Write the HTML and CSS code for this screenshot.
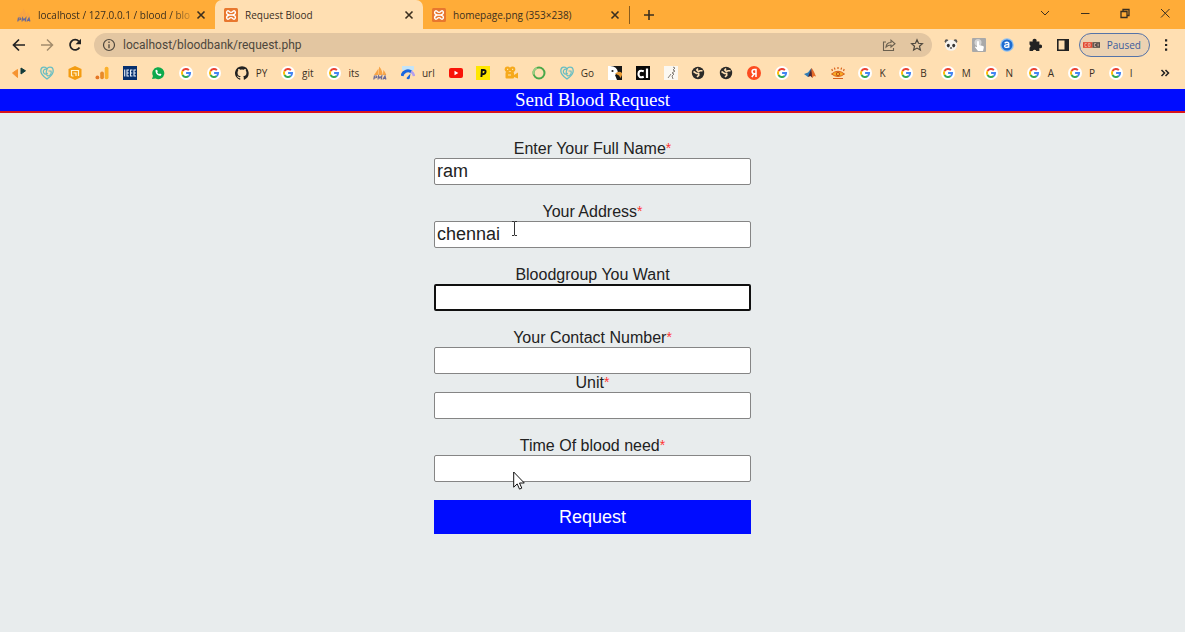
FILE: index.html
```html
<!DOCTYPE html>
<html lang="en">
  <head>
    <meta charset="UTF-8" />
    <meta name="viewport" content="width=device-width, initial-scale=1.0" />
    <title>Request Blood</title>
    <link rel="stylesheet" href="styles.css">
  </head>
  <body>
    <!-- icons used more than once -->
    <svg class="sprite" aria-hidden="true">
      <symbol id="google" viewBox="0 0 14 14">
        <circle cx="7" cy="7" r="7" fill="#fff" />
        <g fill="none" stroke-width="1.9">
          <path d="M3.5 5A4.1 4.1 0 0 1 9.9 4.1" stroke="#ea4335" />
          <path d="M3.5 9A4.1 4.1 0 0 1 3.5 5" stroke="#fbbc05" />
          <path d="M3.5 9A4.1 4.1 0 0 0 9.7 10.1" stroke="#34a853" />
          <path d="M9.7 10.1A4.1 4.1 0 0 0 11.1 7H7.1" stroke="#4285f4" />
        </g>
      </symbol>
      <symbol id="xampp" viewBox="0 0 14 14">
        <rect width="14" height="14" rx="1.5" fill="#e8772e" />
        <path d="M5.200 7Q2 6 2.700 4T5 3.300Q7 5.500 9 3.300q1.700-1.300 2.300.7T8.800 7q3.200 1 2.500 3T9 10.700Q7 8.500 5 10.700q-1.700 1.300-2.300-.7T5.200 7h3.600" fill="none" stroke="#fff" stroke-width="1.400" />
      </symbol>
      <symbol id="pma" viewBox="0 0 14 14">
        <path d="M1 9L5.500 2.500V9zM6 9V.5q3.500 3.500 3.500 8.500zM10 9l.3-5q2.200 2 3 5z" fill="#f8a445" />
        <path d="M.8 13.500l.6-3.500h1.800q1 .3.300 1.500l-2 .3M5 13.500l.6-3.500 1.200 2 2-2-.5 3.500M9.800 13.500l2.200-3.500.9 3.500M10.500 12.300h2" fill="none" stroke="#6b6a96" stroke-width="1.200" />
      </symbol>
      <symbol id="heart" viewBox="0 0 14 14">
        <path d="M7 13C4 11 .8 8.500.8 5 .8 2.500 2.300 1.200 4 1.200S6.500 2 7 3C7.500 2 8.500 1.200 10 1.200s3.200 1.300 3.200 3.800C13.200 8.500 10 11 7 13z" fill="none" stroke="#66bdc2" stroke-width="1.300" />
        <path d="M6.500 3.500C4.500 2.500 2.800 4.500 3.500 6.500s3.500 2.500 4 .3M7 3.500C5.500 6 6 9 8 10c2.500-.5 3.800-2.500 3-5H8.500" fill="none" stroke="#66bdc2" stroke-width="1.200" />
      </symbol>
      <symbol id="globe" viewBox="0 0 14 14">
        <circle cx="7" cy="7" r="6.200" fill="#2b2a28" />
        <path d="M2.500 5.500l3 2h2.200v1.800L6 11M7 2.500L5.800 4l1.500 1.500L9 4.800h2.500" fill="none" stroke="#ffdfb2" stroke-width="1.600" />
      </symbol>
      <symbol id="close" viewBox="0 0 10 10">
        <path d="M1.500 1.500l7 7M8.500 1.500l-7 7" fill="none" stroke="currentColor" stroke-width="1.600" />
      </symbol>
    </svg>

    <div class="browser">
      <div class="tab-bar">
        <div class="tab tab-first">
          <svg class="icon"><use href="#pma" /></svg>
          <span class="tab-title fade">localhost / 127.0.0.1 / blood / blo</span>
          <button class="tab-close" aria-label="Close tab"><svg><use href="#close" /></svg></button>
        </div>
        <div class="tab active">
          <svg class="icon"><use href="#xampp" /></svg>
          <span class="tab-title">Request Blood</span>
          <button class="tab-close" aria-label="Close tab"><svg><use href="#close" /></svg></button>
        </div>
        <div class="tab tab-last">
          <svg class="icon"><use href="#xampp" /></svg>
          <span class="tab-title">homepage.png (353×238)</span>
          <button class="tab-close" aria-label="Close tab"><svg><use href="#close" /></svg></button>
        </div>
        <button class="new-tab" aria-label="New tab">
          <svg viewBox="0 0 12 12"><path d="M6 1v10M1 6h10" stroke="currentColor" stroke-width="1.600" /></svg>
        </button>
        <div class="window-buttons">
          <button aria-label="Search tabs"><svg viewBox="0 0 12 12"><path d="M2 4l4 4 4-4" fill="none" stroke="currentColor" /></svg></button>
          <button aria-label="Minimize"><svg viewBox="0 0 12 12"><path d="M2 6.500h8.500" stroke="currentColor" /></svg></button>
          <button aria-label="Restore"><svg viewBox="0 0 12 12"><path d="M2 4.500h6v6H2zM4 4.500v-2h6v6H8" fill="none" stroke="currentColor" stroke-width="1.300" /></svg></button>
          <button aria-label="Close"><svg viewBox="0 0 12 12"><path d="M2 2l8.500 8.500M10.500 2L2 10.500" fill="none" stroke="currentColor" /></svg></button>
        </div>
      </div>

      <div class="toolbar">
        <div class="nav-buttons">
          <button aria-label="Back"><svg viewBox="0 0 14 14"><path d="M13 7H2M7 1.500L1.500 7 7 12.500" fill="none" stroke="#222" stroke-width="1.700" /></svg></button>
          <button aria-label="Forward"><svg viewBox="0 0 14 14"><path d="M1 7h11M7 1.500L12.500 7 7 12.500" fill="none" stroke="#a38c6c" stroke-width="1.500" /></svg></button>
          <button aria-label="Reload"><svg viewBox="0 0 14 14"><path d="M11.500 9.500a5.100 5.100 0 1 1-.6-6.200" fill="none" stroke="#222" stroke-width="1.800" /><path d="M13 .8v5.400H7.600z" fill="#222" /></svg></button>
        </div>
        <div class="address-bar">
          <svg viewBox="0 0 14 14"><circle cx="7" cy="7" r="5.500" fill="none" stroke="#4d463c" stroke-width="1.200" /><path d="M7 6.200v4M7 3.600v1.400" stroke="#4d463c" stroke-width="1.300" /></svg>
          <input type="text" class="url" aria-label="Address" value="localhost/bloodbank/request.php" />
          <button aria-label="Share"><svg viewBox="0 0 14 14"><path d="M4 4H1.500v8.500h10V10M4 9c.3-3 2-4.500 5-4.500V2.200L13 5.800 9 9V7C7 7 5.500 7.500 4 9z" fill="none" stroke="#6b604f" stroke-width="1.100" /></svg></button>
          <button aria-label="Bookmark"><svg viewBox="0 0 14 14"><path d="M7 1.800l1.500 3.500 3.900.4-2.900 2.600.9 3.800L7 10.100l-3.400 2 .9-3.800-2.900-2.600 3.900-.4z" fill="none" stroke="#4d463c" stroke-width="1.200" /></svg></button>
        </div>
        <div class="extensions">
          <button aria-label="Panda"><svg viewBox="0 0 14 14"><circle cx="2.600" cy="3.200" r="1.900" fill="#555" /><circle cx="11.400" cy="3.200" r="1.900" fill="#555" /><ellipse cx="7" cy="7.300" rx="6" ry="5.500" fill="#f6f3ee" /><ellipse cx="4.300" cy="7.600" rx="1.500" ry="1.800" fill="#333" /><ellipse cx="9.700" cy="7.600" rx="1.500" ry="1.800" fill="#333" /><ellipse cx="7" cy="10" rx="1.200" ry=".8" fill="#333" /></svg></button>
          <button aria-label="Touch"><svg viewBox="0 0 14 14"><rect width="14" height="14" rx="1" fill="#a9a9a9" /><circle cx="6" cy="4.500" r="3.500" fill="#d4d4d4" /><path d="M5 3.500q1-1 2 0V7l4 1q1 .3.800 1.500L11 13H6L2.800 9q.8-1 2.200.3z" fill="#fff" /></svg></button>
          <button aria-label="Reader"><svg viewBox="0 0 14 14"><circle cx="7" cy="7" r="6.800" fill="#8fc0f0" /><circle cx="7" cy="7" r="5.500" fill="#1c6bd0" /><path d="M4.600 5.200q2.400-2 4.200 0v4.600M8.800 6.800q-4-.4-4.200 1.400.4 2.200 4.200.4" fill="none" stroke="#fff" stroke-width="1.300" /></svg></button>
          <button aria-label="Extensions"><svg viewBox="0 0 14 14"><path d="M1.500 3.500h3.300a2 2 0 1 1 3.600 0h3v3.200a1.900 1.900 0 1 1 0 3.400V13H8.300a1.900 1.900 0 0 0-3.500 0H1.500V9.700a1.800 1.800 0 0 0 0-3.200z" fill="#222" /></svg></button>
          <button aria-label="Side panel"><svg viewBox="0 0 14 14"><path d="M1.800 1.800h10.400v10.400H1.800z" fill="none" stroke="#222" stroke-width="1.600" /><path d="M8.500 1.500h4v11h-4z" fill="#222" /></svg></button>
        </div>
        <button class="profile">
          <svg viewBox="0 0 18 8"><path d="M0 1h10v6H0z" fill="#e2452f" /><path d="M10 1h8v6h-8z" fill="#554d48" /><path d="M4 2.500H2v3h2M5.500 2.500h2v3h-2zM14 2.500h-2v3h2M16 2.500v3" fill="none" stroke="#f3c6b4" stroke-width=".8" /></svg>
          Paused
        </button>
        <button class="menu" aria-label="Menu"><svg viewBox="0 0 14 14"><path d="M6 1.200h2.200v2.200H6zM6 5.900h2.200v2.200H6zM6 10.600h2.200v2.200H6z" fill="#222" /></svg></button>
      </div>

      <div class="bookmarks">
        <nav class="bookmark-list">
          <a href="#" aria-label="Shapes"><svg viewBox="0 0 14 14"><path d="M.5 7L5.500 3.500v8z" fill="#f59331" stroke="#f59331" stroke-linejoin="round" /><path d="M9 2l4.500 2.800L9 8z" fill="#123b3b" stroke="#123b3b" stroke-linejoin="round" /></svg></a>
          <a href="#" aria-label="Heart"><svg><use href="#heart" /></svg></a>
          <a href="#" aria-label="Hexagon"><svg viewBox="0 0 14 14"><path d="M7 0l6.500 3v8L7 14 .5 11V3z" fill="#f39c12" /><path d="M3.500 10V4.500h7V10M5.500 7h2.500v3M3.500 10h2" fill="none" stroke="#fff3d0" stroke-width="1.200" /></svg></a>
          <a href="#" aria-label="Analytics"><svg viewBox="0 0 14 14"><circle cx="2.400" cy="11.400" r="1.900" fill="#e57624" /><rect x="5.200" y="5.500" width="3.700" height="7.800" rx="1.800" fill="#e88a28" /><rect x="9.700" y=".8" width="3.800" height="12.500" rx="1.800" fill="#fbb02b" /></svg></a>
          <a href="#" aria-label="IEEE"><svg viewBox="0 0 14 14"><path d="M0 0h14v14H0z" fill="#062f6e" /><path d="M1.700 3.500v7M6 4H4v6h2M4 7h1.800M9.500 4h-2v6h2M7.500 7h1.800M13 4h-2v6h2M11 7h1.800" fill="none" stroke="#e9f1fb" stroke-width="1.100" /></svg></a>
          <a href="#" aria-label="WhatsApp"><svg viewBox="0 0 14 14"><path d="M1 13l1-3A6 6 0 1 1 4.500 12.500z" fill="#0da94c" /><path d="M4.500 4q-.5 5 5 6l1-1.800-1.600-.7-.9.7q-1.300-.7-1.800-1.900l.6-.8L6 3.800z" fill="#fff" /></svg></a>
          <a href="#" aria-label="Google"><svg><use href="#google" /></svg></a>
          <a href="#" aria-label="Google"><svg><use href="#google" /></svg></a>
          <a href="#"><svg viewBox="0 0 16 16"><path d="M8 .2a8 8 0 0 0-2.500 15.600c.4 0 .5-.2.5-.4v-1.500c-2.200.5-2.700-1-2.700-1-.4-.9-.9-1.200-.9-1.200-.7-.5.1-.5.1-.5.800.100 1.200.800 1.200.800.700 1.200 1.900.9 2.300.7.100-.5.300-.9.500-1.100-1.800-.2-3.600-.9-3.600-4 0-.9.300-1.600.8-2.100-.1-.2-.4-1 .1-2.100 0 0 .7-.2 2.200.8a7.600 7.600 0 0 1 4 0c1.500-1 2.200-.8 2.200-.8.400 1.100.2 1.900.1 2.100.5.600.8 1.300.8 2.100 0 3.100-1.900 3.700-3.700 3.900.3.300.6.800.6 1.500v2.200c0 .2.100.500.600.400A8 8 0 0 0 8 .2z" fill="#222" /></svg>PY</a>
          <a href="#"><svg><use href="#google" /></svg>git</a>
          <a href="#"><svg><use href="#google" /></svg>its</a>
          <a href="#" aria-label="phpMyAdmin"><svg><use href="#pma" /></svg></a>
          <a href="#"><svg viewBox="0 0 14 14"><path d="M1 0h12v4H1z" fill="#c4e4f8" /><path d="M1 10a6 6 0 0 1 9.500-4" fill="none" stroke="#1967e0" stroke-width="3" /><path d="M10 5.700a6 6 0 0 1 3 4.500" fill="none" stroke="#b5a0ee" stroke-width="2.500" /><path d="M5.500 12l4-4.500L8.800 12a1.700 1.700 0 0 1-3.300 0z" fill="#1967e0" /></svg>url</a>
          <a href="#" aria-label="YouTube"><svg viewBox="0 0 14 14"><rect y="2" width="14" height="10" rx="2" fill="#f91307" /><path d="M5.500 4.800v4.400L9.300 7z" fill="#fff" /></svg></a>
          <a href="#" aria-label="P"><svg viewBox="0 0 14 14"><path d="M0 0h14v14H0z" fill="#ffe600" /><path d="M5.400 11l.5-7h1.600q2.600.2 2 2.300T5.800 8.200" fill="none" stroke="#111" stroke-width="1.900" /></svg></a>
          <a href="#" aria-label="Movies"><svg viewBox="0 0 14 14"><circle cx="3.500" cy="3.300" r="2.800" fill="#f6a91b" /><circle cx="8.500" cy="3.300" r="2.800" fill="#f6a91b" /><rect x="1.500" y="6" width="8.500" height="6.500" rx="1" fill="#f6a91b" /><path d="M10 9l4-2.500v6L10 11z" fill="#f6a91b" /><path d="M3 2.800h1.200v1.200H3zM8 2.800h1.200v1.200H8zM4 8.500h3v1H4z" fill="#ffe5ac" /></svg></a>
          <a href="#" aria-label="Ring"><svg viewBox="0 0 14 14"><circle cx="7" cy="7" r="5.500" fill="none" stroke="#49a849" stroke-width="2" /><path d="M5 1.900a5.500 5.500 0 0 0-3.300 6.500" fill="none" stroke="#9bcf83" stroke-width="2" /></svg></a>
          <a href="#"><svg><use href="#heart" /></svg>Go</a>
          <a href="#" aria-label="Duck"><svg viewBox="0 0 14 14"><path d="M0 0h14v14H0z" fill="#171717" /><path d="M0 0q9-.5 10 6.500L7 9l2 5H0z" fill="#fff" /><circle cx="4.500" cy="5" r="1.100" fill="#222" /><path d="M7 7.500q4-3 7-.5v2l-1.500 3-1.500-2.500z" fill="#e79a34" /></svg></a>
          <a href="#" aria-label="cl"><svg viewBox="0 0 14 14"><path d="M0 0h14v14H0z" fill="#080808" /><path d="M7.800 5.200Q2.500 3.500 2.500 8t5.300 2.800M11 2.500v9.500" fill="none" stroke="#fff" stroke-width="2.200" /></svg></a>
          <a href="#" aria-label="Figure"><svg viewBox="0 0 14 14"><path d="M0 0h14v14H0z" fill="#fbf8f2" /><path d="M9 1l2 1-2 2 2 1-3 2 2 1-2 2M7 8l-3 4M8 10l1 3" fill="none" stroke="#77716a" stroke-width=".9" /></svg></a>
          <a href="#" aria-label="Site"><svg><use href="#globe" /></svg></a>
          <a href="#" aria-label="Site"><svg><use href="#globe" /></svg></a>
          <a href="#" aria-label="Yandex"><svg viewBox="0 0 14 14"><circle cx="7" cy="7" r="7" fill="#fc4b20" /><path d="M9 11V3.500H7.300q-2.200 0-2.200 2.100t2.200 2.100H9M7.200 7.700L4.800 11" fill="none" stroke="#fff" stroke-width="1.500" /></svg></a>
          <a href="#" aria-label="Google"><svg><use href="#google" /></svg></a>
          <a href="#" aria-label="MATLAB"><svg viewBox="0 0 14 14"><path d="M1 8l4-1.500L8.500 2l-1 6L5 11z" fill="#317bb5" /><path d="M5 11l2-5 1.500-4 1 10-2-2z" fill="#4b2431" /><path d="M8.500 2Q10 3 13 10.500l-2-.5-2 2z" fill="#e36b2b" /></svg></a>
          <a href="#" aria-label="Eye"><svg viewBox="0 0 14 14"><path d="M.5 8Q7 2.500 13.500 8 7 13 .5 8z" fill="#f9ab24" stroke="#d8611b" /><circle cx="7" cy="8" r="2" fill="#b9430f" /><circle cx="7" cy="8" r="1" fill="#ffd33a" /><path d="M1.500 5L.8 3M4 3.600l-.6-2M7 3V1M10 3.600l.6-2M12.500 5l.7-2M2 12.500h10" stroke="#d8611b" stroke-width="1.200" /></svg></a>
          <a href="#"><svg><use href="#google" /></svg>K</a>
          <a href="#"><svg><use href="#google" /></svg>B</a>
          <a href="#"><svg><use href="#google" /></svg>M</a>
          <a href="#"><svg><use href="#google" /></svg>N</a>
          <a href="#"><svg><use href="#google" /></svg>A</a>
          <a href="#"><svg><use href="#google" /></svg>P</a>
          <a href="#"><svg><use href="#google" /></svg>I</a>
        </nav>
        <button class="more" aria-label="More bookmarks"><svg viewBox="0 0 10 10"><path d="M1.500 2l3 3-3 3M5.500 2l3 3-3 3" fill="none" stroke="#222" stroke-width="1.500" /></svg></button>
      </div>
    </div>

    <h1 class="title">Send Blood Request</h1>

    <form class="request-form">
      <div class="field">
        <label for="name">Enter Your Full Name<span class="star">*</span></label>
        <input type="text" id="name" value="ram" />
      </div>
      <div class="field">
        <label for="address">Your Address<span class="star">*</span></label>
        <input type="text" id="address" value="chennai" />
        <svg class="text-cursor" viewBox="0 0 7 15"><path d="M1 .5h2l.5.5.5-.5h2M3.500 1v13M1 14.500h2l.5-.5.5.5h2" fill="none" stroke="#333" /></svg>
      </div>
      <div class="field">
        <label for="bloodgroup">Bloodgroup You Want</label>
        <input type="text" id="bloodgroup" class="focused" />
      </div>
      <div class="field joined">
        <label for="contact">Your Contact Number<span class="star">*</span></label>
        <input type="text" id="contact" />
      </div>
      <div class="field">
        <label for="unit">Unit<span class="star">*</span></label>
        <input type="text" id="unit" />
      </div>
      <div class="field">
        <label for="time">Time Of blood need<span class="star">*</span></label>
        <input type="text" id="time" />
        <svg class="pointer" viewBox="0 0 12 19"><path d="M.7 1v15.200l3.500-3.300 2.300 5.200 2.300-1-2.300-5.100h4.800z" fill="#fff" stroke="#111" /></svg>
      </div>
      <button type="button" class="request-btn">Request</button>
    </form>
  </body>
</html>
```
FILE: styles.css
```css
* {
  box-sizing: border-box;
}

body {
  margin: 0;
  background-color: #e8eced;
  color: #222;
  font-family: "Liberation Sans", Arial, sans-serif;
  font-size: 16px;
}

button {
  padding: 0;
  border: none;
  background: none;
  color: inherit;
  font-family: inherit;
  cursor: pointer;
}

svg {
  display: block;
  flex: none;
}

.sprite {
  position: absolute;
  width: 0;
  height: 0;
}

/* browser window */
.browser {
  background-color: #ffdfb2;
  color: #3b2f1f;
  font-family: "Open Sans", "Noto Sans", sans-serif;
  font-size: 10px;
}

.tab-bar {
  display: flex;
  align-items: center;
  height: 29px;
  background-color: #ffac38;
}

.tab {
  display: flex;
  align-items: center;
  gap: 7px;
  width: 208px;
  height: 29px;
  padding: 0 9px;
}

.tab-first {
  width: 215px;
  padding-left: 17px;
}

.tab-first .tab-close {
  margin-left: -7px;
}

.tab.active {
  border-radius: 7px 7px 0 0;
  background-color: #ffdfb2;
}

.tab-last {
  width: 207px;
  height: 18px;
  border-right: 1px solid #8a5c1c;
}

.icon {
  width: 14px;
  height: 14px;
}

.tab-title {
  flex: 1;
  white-space: nowrap;
}

.fade {
  mask-image: linear-gradient(to right, #000 85%, transparent);
}

.tab-close svg {
  width: 10px;
  height: 10px;
}

.new-tab {
  margin-left: 13px;
}

.new-tab svg {
  width: 12px;
  height: 12px;
}

.window-buttons {
  display: flex;
  gap: 28px;
  margin-left: auto;
  padding: 0 14px 4px 0;
}

.window-buttons svg {
  width: 12px;
  height: 12px;
}

.toolbar {
  display: flex;
  align-items: center;
  height: 32px;
  padding: 0 12px;
}

.toolbar svg {
  width: 14px;
  height: 14px;
}

.nav-buttons,
.extensions {
  display: flex;
  gap: 14px;
}

.address-bar {
  display: flex;
  flex: 1;
  align-items: center;
  gap: 14px;
  height: 24px;
  margin: 0 12px;
  padding: 0 8px;
  border-radius: 12px;
  background-color: #e3c6a1;
}

.url {
  flex: 1;
  min-width: 0;
  margin-left: -7px;
  padding: 0;
  border: none;
  outline: none;
  background: none;
  color: #4d463c;
  font-family: Roboto, "Open Sans", sans-serif;
  font-size: 12px;
}

.toolbar .profile {
  display: flex;
  align-items: center;
  gap: 7px;
  height: 24px;
  margin: 0 9px;
  padding: 0 8px 0 3px;
  border: 1px solid #5573a8;
  border-radius: 12px;
  background-color: #ecd2b2;
  color: #3d5c9c;
  font-size: 10px;
}

.toolbar .profile svg {
  width: 17px;
  height: 8px;
}

.bookmarks {
  display: flex;
  align-items: center;
  justify-content: space-between;
  height: 28px;
  padding: 0 15px 4px 12px;
}

.bookmark-list {
  display: flex;
  flex: 1;
  justify-content: space-between;
  margin-right: 27px;
}

.bookmark-list a {
  display: flex;
  align-items: center;
  gap: 7px;
  height: 14px;
  color: inherit;
  text-decoration: none;
}

.bookmark-list svg {
  width: 14px;
  height: 14px;
}

.more svg {
  width: 10px;
  height: 10px;
}

/* blood request page */
.title {
  margin: 0;
  border-bottom: 2px solid #d8141c;
  background-color: #000cff;
  color: #fff;
  font-family: "Liberation Serif", "Times New Roman", serif;
  font-size: 19px;
  font-weight: normal;
  line-height: 22px;
  text-align: center;
}

.request-form {
  width: 317px;
  max-width: 100%;
  margin: 27px auto 0;
}

.field {
  position: relative;
  margin-bottom: 18px;
  text-align: center;
}

.field.joined {
  margin-bottom: 0;
}

.field label {
  display: block;
  line-height: 18px;
}

.star {
  color: #f33;
  font-size: 14px;
  line-height: 1;
  vertical-align: 1px;
}

.field input {
  display: block;
  width: 100%;
  height: 27px;
  padding: 0 2px;
  border: 1px solid #858585;
  border-radius: 2px;
  background-color: #fff;
  color: #222;
  font-family: inherit;
  font-size: 18px;
}

.field input:focus,
.field input.focused {
  border: 2px solid #101010;
  outline: none;
}

.request-btn {
  display: block;
  width: 100%;
  height: 34px;
  background-color: #000cff;
  color: #fff;
  font-size: 18px;
}

.text-cursor {
  position: absolute;
  top: 18px;
  left: 77px;
  width: 7px;
  height: 15px;
}

.pointer {
  position: absolute;
  top: 34px;
  left: 79px;
  width: 12px;
  height: 19px;
}
```
